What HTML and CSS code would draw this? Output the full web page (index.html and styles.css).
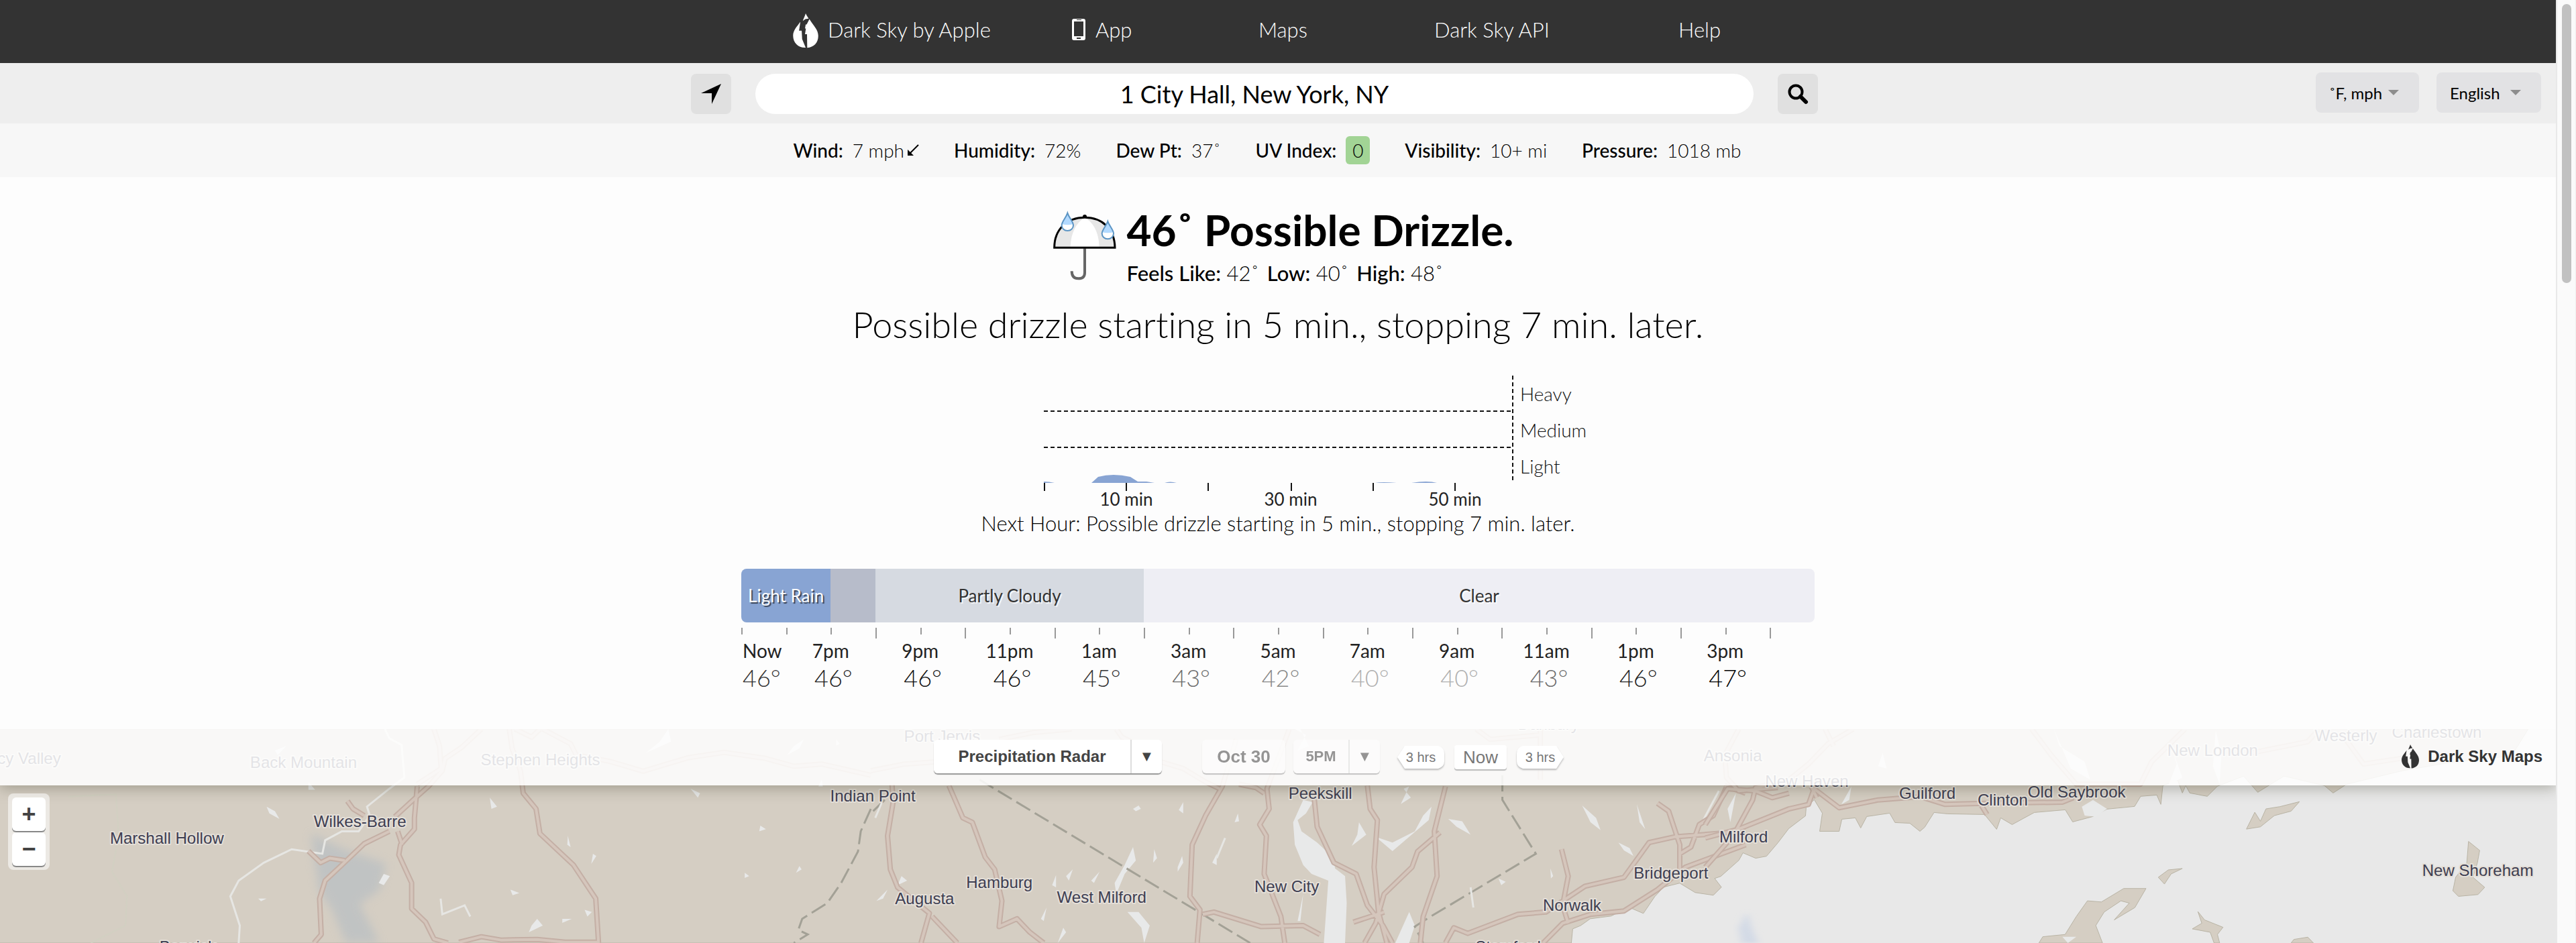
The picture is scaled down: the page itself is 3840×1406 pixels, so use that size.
FILE: index.html
```html
<!DOCTYPE html>
<html lang="en">
<head>
<meta charset="utf-8">
<title>Dark Sky - 1 City Hall, New York, NY</title>
<link rel="stylesheet" href="styles.css">
</head>
<body>
<svg class="defs" aria-hidden="true">
  <symbol id="drop" viewBox="0 0 114 158">
    <path fill="currentColor" d="M57 0C62 12 67 17 71 24Q56 23 44 34C48 22 54 11 57 0zM33 38L27 78H39L41 116L57 155C25 157 0 134 0 101C0 76 16 62 33 38zM74 26C92 55 114 74 114 102C114 134 94 153 64 156L63 94H54L58 68H54L57 50H66V55H59z"/>
  </symbol>
</svg>
<div class="page">
  <header class="topbar">
    <nav class="nav">
      <a href="#" class="brand"><svg class="logo"><use href="#drop"/></svg>Dark Sky by Apple</a>
      <a href="#" class="app"><svg class="phone" viewBox="0 0 20 32"><path fill="#fff" fill-rule="evenodd" d="M3 0H17Q20 0 20 3V29Q20 32 17 32H3Q0 32 0 29V3Q0 0 3 0zM3 4V26H17V4zM7 28V30H13V28zM7 1V2H14V1z"/></svg>App</a>
      <a href="#">Maps</a>
      <a href="#">Dark Sky API</a>
      <a href="#">Help</a>
    </nav>
  </header>

  <form class="search">
    <div class="search-main">
      <button type="button" class="square" aria-label="Use my location"><svg viewBox="0 0 32 32" width="32" height="32"><path d="M31 1L17 31V15H1z"/></svg></button>
      <input class="query" type="text" value="1 City Hall, New York, NY" aria-label="Location">
      <button type="submit" class="square" aria-label="Search"><svg viewBox="0 0 32 32" width="32" height="32"><circle cx="13" cy="13" r="9.500" fill="none" stroke="#000" stroke-width="4"/><path d="M20 20L28 28" stroke="#000" stroke-width="6" stroke-linecap="round"/></svg></button>
    </div>
    <div class="prefs">
      <label class="pref units"><select aria-label="Units"><option>˚F, mph</option></select></label>
      <label class="pref"><select aria-label="Language"><option>English</option></select></label>
    </div>
  </form>

  <dl class="stats">
    <div><dt>Wind:</dt><dd class="wind">7 mph<svg viewBox="0 0 18 18" width="18" height="18"><path d="M17 1L5 13" stroke="#000" stroke-width="2"/><path d="M1 17V8L10 17z"/></svg></dd></div>
    <div><dt>Humidity:</dt><dd>72%</dd></div>
    <div><dt>Dew Pt:</dt><dd>37˚</dd></div>
    <div><dt>UV Index:</dt><dd class="uv">0</dd></div>
    <div><dt>Visibility:</dt><dd>10+ mi</dd></div>
    <div><dt>Pressure:</dt><dd>1018 mb</dd></div>
  </dl>

  <main class="forecast">
    <section class="current">
      <svg class="umbrella" viewBox="0 0 360 375">
        <path d="M174 196V305Q174 331 145 331Q116 331 116 298" fill="none" stroke="#666" stroke-width="12"/>
        <ellipse cx="174" cy="54" rx="9" ry="9"/>
        <path d="M38 193C38 110 95 58 174 58S308 110 309 193z" fill="#e7e7e7"/>
        <path d="M110 188C112 125 140 75 174 60C210 75 238 125 238 188z" fill="#fff"/>
        <path d="M38 193C38 110 95 58 174 58S308 110 309 193z" fill="none" stroke="#000" stroke-width="9"/>
        <path d="M97 38C104 60 123 76 123 93A26 24 0 0 1 71 93C71 76 90 60 97 38z" fill="#fff"/>
        <path d="M97 38C104 60 119 72 122 88Q97 94 72 88C75 72 90 60 97 38z" fill="#b3daff"/>
        <path d="M97 38C104 60 123 76 123 93A26 24 0 0 1 71 93C71 76 90 60 97 38z" fill="none" stroke="#5c95c4" stroke-width="6"/>
        <path d="M277 75C284 97 303 113 303 130A26 24 0 0 1 251 130C251 113 270 97 277 75z" fill="#fff"/>
        <path d="M277 75C284 97 299 109 302 124Q277 130 252 124C255 109 270 97 277 75z" fill="#b3daff"/>
        <path d="M277 75C284 97 303 113 303 130A26 24 0 0 1 251 130C251 113 270 97 277 75z" fill="none" stroke="#5c95c4" stroke-width="6"/>
      </svg>
      <div class="current-text">
        <h1>46˚ Possible Drizzle.</h1>
        <p class="feels"><span><b>Feels Like:</b> 42˚</span><span><b>Low:</b> 40˚</span><span><b>High:</b> 48˚</span></p>
      </div>
    </section>
    <p class="summary">Possible drizzle starting in 5 min., stopping 7 min. later.</p>

    <svg class="hour-chart" viewBox="0 0 922 200" role="img" aria-label="Precipitation over the next hour">
      <path class="rain" d="M112 160V158Q120 158 128 160zM183 160L193 151Q204 148 216 148T241 151L252 158H265L277 160zM292 160Q300 157 310 160zM606 160Q616 158 638 160zM660 160Q684 156 698 160z"/>
      <path class="dash" d="M112 53H812M112 107H812M811 0V160"/>
      <path class="tick" d="M113 160V172M235 160V172M357 160V172M481 160V172M603 160V172M725 160V172"/>
      <g class="level"><text x="822" y="38">Heavy</text><text x="822" y="92">Medium</text><text x="822" y="146">Light</text></g>
      <g class="minute"><text x="235" y="194">10 min</text><text x="480" y="194">30 min</text><text x="725" y="194">50 min</text></g>
    </svg>
    <p class="next-hour">Next Hour: Possible drizzle starting in 5 min., stopping 7 min. later.</p>

    <section class="timeline">
      <div class="bars">
        <span class="rainy">Light Rain</span><span class="overcast"></span><span class="partly">Partly Cloudy</span><span class="clear">Clear</span>
      </div>
      <div class="ticks"><i></i><i></i><i></i><i></i><i></i><i></i><i></i><i></i><i></i><i></i><i></i><i></i><i></i><i></i><i></i><i></i><i></i><i></i><i></i><i></i><i></i><i></i><i></i><i></i></div>
      <ol class="hours">
        <li><span>Now</span><b class="t3">46°</b></li>
        <li><span>7pm</span><b class="t2">46°</b></li>
        <li><span>9pm</span><b class="t1">46°</b></li>
        <li><span>11pm</span><b class="t1">46°</b></li>
        <li><span>1am</span><b class="t3">45°</b></li>
        <li><span>3am</span><b class="t4">43°</b></li>
        <li><span>5am</span><b class="t5">42°</b></li>
        <li><span>7am</span><b class="t6">40°</b></li>
        <li><span>9am</span><b class="t6">40°</b></li>
        <li><span>11am</span><b class="t4">43°</b></li>
        <li><span>1pm</span><b class="t2">46°</b></li>
        <li><span>3pm</span><b class="t0">47°</b></li>
      </ol>
    </section>
  </main>

  <section class="map">
    <svg class="map-art" viewBox="0 0 3810 318" preserveAspectRatio="xMidYMin slice" aria-hidden="true">
      <defs>
        <filter id="soft" x="-30%" y="-30%" width="160%" height="160%"><feGaussianBlur stdDeviation="7"/></filter>
        <path id="roads-west" d="M870 84L835 165L805 215L800 270L775 340L750 395L715 475M785 84L795 160L798 260L755 330M755 340L750 480L750 530L725 600L722 645L745 770L745 885L770 945L785 1020L810 1038M920 84L925 170L940 270L945 370L968 440L975 550L1035 690L1075 840L1080 1038M705 540L660 595L620 690L590 760L580 840L583 1000L570 1038M720 540L728 600M630 405L640 440L660 470M560 628L582 680L598 660L625 670M980 84L1030 150L1040 200L1100 228L1160 272L1240 212L1305 188L1380 215L1430 250L1480 240L1568 290M830 1035L870 1010L905 1025L970 1022L1020 1034L1080 1034M930 84L960 120L975 84"/>
        <path id="roads-mid" d="M0 270L60 240L120 230M38 330L40 410L30 560L35 710L48 790L105 905L90 1038M110 920L155 1038M140 336L165 480L182 500L205 655L222 710L235 850L230 965L262 930L285 990L310 1038M230 130L290 100L360 84M440 84L450 120L500 180L520 230L560 260L600 320L625 350M655 130L630 340L600 470L576 600L572 830L590 890L585 1038M750 84L710 350L714 440L697 510L709 560L705 730L735 920L742 1038M660 330L690 345L705 370M595 910L615 900L700 965L775 960L805 1000M890 336L895 440L908 490L902 700L910 900L925 1038M795 400L800 520L830 680L870 730L890 870L918 960L935 1038M1030 340L1010 540L1015 740L990 920L985 1038M1020 545L980 630L970 700L920 820L905 950L885 1038M865 945L920 900M1085 84L1110 130L1200 110M1200 84V310M1030 1038L1045 970L1070 995L1160 910L1210 900L1280 785L1350 745L1395 590L1440 565L1568 540M1205 1038L1240 950L1290 910L1350 895L1410 800L1460 700L1568 600M1238 620L1250 740L1240 870L1250 950M1410 415L1430 450L1450 600L1450 720M1535 336L1510 470L1485 510L1470 610L1450 640M1568 370L1530 336"/>
        <path id="roads-east" d="M60 84L35 200L38 300L60 360L130 345M0 510L40 350L90 360L120 390L150 370M265 84L220 150L185 240L150 310L90 345L85 400L50 560L0 700M0 570L60 530L150 440L185 420L195 350L240 435L310 400L385 385L430 420L500 415L640 410L660 390M190 340L200 390M215 84L230 160M585 84L620 200L665 330L780 330L800 230L860 84M495 425L505 465M980 190L1080 140L1100 84M1145 120L1180 240L1260 210"/>
      </defs>
      <path class="land" d="M0 0H3763L3738 40L3651 49L3576 62L3493 82L3473 95L3460 84L3400 70L3361 94L3340 70L3301 85L3286 100L3260 95L3254 84L3249 95L3242 76L3220 84L3217 112L3211 98L3187 100L3178 115L3137 119L3116 130L3086 138L3075 120L3029 124L2996 142L2979 132L2973 149L2955 127L2900 126L2880 124L2866 146L2859 152L2844 140L2822 139L2814 125L2780 130L2771 147L2763 132L2743 134L2739 152L2710 152L2714 125L2702 105L2690 116L2689 129L2664 148L2648 169L2631 189L2615 192L2596 184L2590 195L2563 219L2554 222L2564 235L2552 247L2525 243L2502 229L2478 235L2465 249L2448 274L2427 265L2400 278L2384 280L2369 282L2355 292L2343 297L2341 318H0z"/>
      <g class="radar" filter="url(#soft)"><path d="M468 155L520 180L580 200L570 240L540 260L570 318H520L500 270L480 240z"/></g>
      <g transform="translate(2540 -28) scale(.82908 .33333)">
        <path class="land" d="M970 530L985 455L995 495L1005 440L1030 430L1065 408L1050 450L1020 470L995 520zM812 745L830 712L855 706L835 730L823 775zM598 1038L605 1010L645 1000L665 920L685 850L710 855L750 795L790 795L770 880L733 935L760 860L745 850L715 900L700 960L712 1038zM873 975L890 950L883 898L895 935L928 968L918 1000L922 1038H912L905 990zM1368 585L1388 625L1384 680L1376 745L1397 790L1385 822L1350 830L1340 805L1345 745L1365 680zM1050 1038L1055 1022L1080 1012L1090 1038z"/>
        <path class="water" d="M675 430L695 400L720 440L700 475L680 470zM40 440L55 370L45 500zM244 420L262 340L258 400zM310 250L318 190L325 260zM625 84L635 160L680 230L690 310L655 260zM640 1010L665 1010L650 1038zM830 336L845 240L835 160L855 300zM915 90L925 200L922 330L910 250z"/>
        <path class="radar-line" filter="url(#soft)" d="M75 900L60 970L65 1038H95L82 960z"/>
      </g>
      <g transform="translate(1300 -28) scale(.82908 .33333)">
        <path class="water" d="M775 400L792 410L780 460L765 490L772 540L800 590L830 660L832 705L850 740L853 860L850 1038H812L820 760L790 730L775 690L760 600L757 500zM470 610L475 670L455 730L440 820L437 770L455 690zM770 84L785 160L765 180L780 110L760 84zM955 350L968 390L950 418L965 340zM1035 485L1060 495L1075 555L1050 520zM905 565L935 590L975 540L990 470L1005 430L1000 490L935 628zM875 500L888 555L862 605L872 555zM1275 425L1300 480L1308 535L1290 500zM1373 420L1388 530L1378 500zM1340 590L1360 615L1367 650L1350 625zM470 440L480 425L484 440L475 450zM552 445L560 410L560 460zM652 500L658 460L660 495zM508 620L513 660L506 680zM550 700L558 650L560 680L550 720zM612 680L620 640L620 690zM325 780L332 735L332 790zM350 740L362 710L355 760zM55 740L65 760L48 780zM10 850L30 800L22 840zM305 930L315 880L310 940zM335 1038L345 970L350 990zM765 940L775 820L770 940zM940 1038L965 900L975 960L965 1038zM1125 750L1138 765L1130 780zM1218 705L1223 740L1219 750zM410 720L400 770L395 760zM460 900L480 900L500 960L490 1038L485 970z"/>
        <path class="border" d="M195 310L680 1038M1132 290L1132 400L1192 640L1000 925L975 965L990 1038M25 400L0 460"/>
        <path class="river" d="M8 480L20 410M635 570L620 660M1520 360L1490 500M1075 790L1080 880"/>
      </g>
      <g transform="translate(0 -28) scale(.82908 .33333)">
        <path class="river" d="M697 84L705 125L727 155L732 300L705 350L665 430L670 470L650 540L620 540L590 580L585 640L530 620L480 680L435 760L420 830L437 960L435 1038M797 840L800 910L840 870L850 920"/>
        <path class="river faint" d="M130 385L215 375L220 560L208 720L235 830L232 960L170 1038"/>
        <path class="water" d="M1205 84L1210 140L1165 190L1190 140zM1448 130L1440 170L1418 200L1430 160zM1506 130L1512 150L1506 158zM520 160L505 200L500 180zM560 320L572 355L560 355zM485 430L500 450L508 485L490 460zM885 390L898 430L888 440zM695 730L706 740L695 780L686 770zM1025 560L1030 610L1024 600zM1070 640L1076 650L1067 685zM1370 515L1380 530L1368 540zM1342 725L1350 740L1342 748zM1440 695L1444 710L1434 725zM1245 350L1262 370L1258 390zM970 930L980 960L955 990L960 960zM1055 890L1068 900L1060 920zM1015 930L1032 930L1015 948zM922 800L938 815L926 825zM470 840L485 840L475 852zM1480 310L1482 340L1474 340z"/>
        <path class="border" d="M1568 440L1550 540L1545 630L1515 770L1490 860L1445 930L1438 980L1455 1000L1430 1038"/>
      </g>
      <g transform="translate(0 -28) scale(.82908 .33333)"><use href="#roads-west" class="road"/><use href="#roads-west" class="road-core"/></g>
      <g transform="translate(1300 -28) scale(.82908 .33333)"><use href="#roads-mid" class="road"/><use href="#roads-mid" class="road-core"/></g>
      <g transform="translate(2540 -28) scale(.82908 .33333)"><use href="#roads-east" class="road"/><use href="#roads-east" class="road-core"/></g>
      <g class="places">
        <text x="26" y="52">Muncy Valley</text><text x="457" y="58">Back Mountain</text><text x="809" y="54">Stephen Heights</text>
        <text x="1406" y="19">Port Jervis</text><text x="2307" y="1">Danbury</text><text x="2581" y="48">Ansonia</text><text x="3294" y="40">New London</text>
        <text x="3492" y="18">Westerly</text><text x="3627" y="13">Charlestown</text><text x="2691" y="86">New Haven</text>
        <text x="541" y="146">Wilkes-Barre</text><text x="254" y="170">Marshall Hollow</text><text x="285" y="332">Berwick</text>
        <text x="1303" y="108">Indian Point</text><text x="1968" y="104">Peekskill</text><text x="1491" y="236">Hamburg</text><text x="1380" y="260">Augusta</text>
        <text x="1643" y="258">West Milford</text><text x="1918" y="242">New City</text><text x="2342" y="270">Norwalk</text><text x="2489" y="222">Bridgeport</text>
        <text x="2247" y="332">Stamford</text><text x="2597" y="168">Milford</text><text x="2870" y="104">Guilford</text><text x="2982" y="114">Clinton</text>
        <text x="3092" y="102">Old Saybrook</text><text x="3688" y="218">New Shoreham</text>
      </g>
    </svg>
    <div class="map-bar">
      <div class="layer"><button type="button">Precipitation Radar</button><button type="button" class="more" aria-label="Choose layer">▼</button></div>
      <button type="button" class="date">Oct 30</button>
      <div class="layer time"><button type="button">5PM</button><button type="button" class="more" aria-label="Choose time">▼</button></div>
      <div class="steps">
        <button type="button" class="step back"><svg viewBox="0 0 72 37"><path d="M12 1H62Q71 4 71 12V24Q71 32 62 35H12L1 18z"/></svg><span>3 hrs</span></button>
        <button type="button" class="now">Now</button>
        <button type="button" class="step"><svg viewBox="0 0 72 37"><path d="M10 1H60L71 18L60 35H10Q1 32 1 24V12Q1 4 10 1z"/></svg><span>3 hrs</span></button>
      </div>
      <a href="#" class="maps-link"><svg><use href="#drop"/></svg>Dark Sky Maps</a>
    </div>
    <div class="zoom"><button type="button" aria-label="Zoom in">+</button><button type="button" aria-label="Zoom out">−</button></div>
  </section>
</div>
<div class="scrollbar" aria-hidden="true"><div class="thumb"></div></div>
</body>
</html>
```
FILE: styles.css
```css
* { box-sizing: border-box; }
body {
  margin: 0;
  display: flex;
  min-height: 100vh;
  background: #fdfdfd;
  color: #000;
  font-family: Lato, "Liberation Sans", sans-serif;
  font-weight: 300;
  font-variant-ligatures: no-common-ligatures;
}
p, h1, dl, dd, ol { margin: 0; padding: 0; }
a { color: inherit; text-decoration: none; }
button, input, select { font: inherit; color: inherit; border: 0; margin: 0; }
.defs { position: absolute; width: 0; height: 0; }
.page { flex: 1; min-width: 0; display: flex; flex-direction: column; }

.scrollbar { width: 30px; padding: 6px 6px 0 7px; background: #fafafa; border-left: 2px solid #e9e9e9; border-right: 1px solid #f0f0f0; }
.thumb { height: 416px; border-radius: 8px; background: #c1c1c1; }

.topbar { background: #333; color: #fff; }
.nav {
  display: grid;
  grid-template-columns: 417px 278px 262px 364px auto;
  width: 1448px;
  margin: 0 auto;
  padding: 20px 0 22px;
  font-size: 31px;
  line-height: 52px;
}
.nav a { display: flex; align-items: center; height: 52px; padding-bottom: 4px; }
.brand { gap: 13px; }
.logo { width: 40px; height: 52px; flex: none; position: relative; top: 2px; }
.app { gap: 15px; }
.phone { width: 20px; height: 32px; }

.search { display: grid; grid-template-columns: 1fr 1750px 1fr; height: 90px; background: #eee; }
.search-main { grid-column: 2; display: flex; align-items: flex-start; gap: 36px; padding: 16px 70px 0 0; }
.square { flex: none; width: 60px; height: 60px; padding: 0; border-radius: 8px; background: #e0e0e0; display: flex; align-items: center; justify-content: center; }
.query { flex: 1; min-width: 0; height: 60px; padding: 0 30px; border-radius: 30px; background: #fff; font-size: 36px; font-weight: 400; text-align: center; }
.prefs { display: flex; justify-content: flex-end; align-items: flex-start; gap: 26px; padding: 14px 22px 0 0; }
.pref { position: relative; width: 156px; height: 60px; border-radius: 8px; background: #e2e2e4; font-size: 24px; font-weight: 400; }
.units { width: 154px; }
.pref select { width: 100%; height: 60px; padding: 0 20px; appearance: none; background: transparent; }
.pref::after { content: ""; position: absolute; right: 30px; top: 26px; border: 8px solid transparent; border-top-color: #8d8d8d; border-bottom: 0; }

.stats { display: flex; justify-content: center; align-items: center; gap: 52px; height: 80px; padding-right: 32px; background: #f7f7f7; font-size: 28px; line-height: 42px; }
.stats div { display: flex; gap: 14px; }
.stats dt { font-weight: 500; }
.wind { display: flex; align-items: center; gap: 4px; }
.uv { width: 36px; text-align: center; border-radius: 6px; background: #a2d495; }

.forecast { padding: 41px 0 55px; text-align: center; }
.current { display: flex; justify-content: center; text-align: left; height: 125px; padding-left: 6px; }
.umbrella { width: 120px; height: 125px; }
.current-text { padding-top: 2px; }
h1 { font-size: 64px; line-height: 72px; font-weight: 700; }
.feels { display: flex; gap: 12px; margin-top: 8px; font-size: 31px; line-height: 40px; }
.feels b { font-weight: 500; }
.summary { padding-top: 20px; font-size: 54px; line-height: 68px; }
.hour-chart { display: block; width: 922px; height: 200px; margin: 42px auto 0; }
.rain { fill: #88a4d3; }
.dash { fill: none; stroke: #111; stroke-width: 2; stroke-dasharray: 6 4; }
.tick { stroke: #111; stroke-width: 2; }
.level { font-size: 28px; fill: #111; }
.minute { font-size: 26px; font-weight: 400; fill: #222; text-anchor: middle; }
.next-hour { font-size: 31px; line-height: 40px; }

.timeline { width: 1600px; margin: 48px auto 0; }
.bars { display: grid; grid-template-columns: 2fr 1fr 6fr 15fr; height: 80px; border-radius: 8px; overflow: hidden; font-size: 26px; line-height: 80px; font-weight: 400; color: #333; text-shadow: 2px 2px 1px rgba(255,255,255,.8); }
.rainy { background: #88a4d3; color: #fff; white-space: nowrap; text-shadow: 2px 2px 1px rgba(0,0,0,.6); }
.overcast { background: #b7bcca; }
.partly { background: #d6dae1; }
.clear { background: #eeeef4; }
.ticks { display: grid; grid-template-columns: repeat(24, 1fr); height: 24px; padding-top: 8px; }
.ticks i { height: 10px; border-left: 2px solid #999; }
.ticks i:nth-child(2n+4) { height: 16px; }
.hours { display: grid; grid-template-columns: repeat(24, 1fr); list-style: none; }
.hours li { grid-column-end: span 2; display: flex; flex-direction: column; align-items: center; }
.hours li:first-child { grid-column-end: span 1; align-items: flex-start; padding-left: 2px; }
.hours span { font-size: 28px; line-height: 36px; font-weight: 400; color: #222; }
.hours b { padding-left: 8px; font-size: 36px; line-height: 44px; font-weight: 300; }
.hours li:first-child b { padding-left: 0; }
.hours .t0 { color: #000; }
.t1 { color: #111; }
.t2 { color: #222; }
.t3 { color: #333; }
.t4 { color: #6c6c6c; }
.t5 { color: #888; }
.t6 { color: #b0b0b0; }

.map { position: relative; flex: 1; min-height: 318px; overflow: hidden; background: #e8e8e8; font-family: "Liberation Sans", Arial, sans-serif; }
.map-art { position: absolute; left: 0; top: 0; width: 100%; height: 100%; }
.map-art path, .map-art use { vector-effect: non-scaling-stroke; }
.land { fill: #d5cec3; stroke: #b9b4a5; stroke-width: 1; }
.water { fill: #e8e9e9; }
.river { fill: none; stroke: #e6e6e3; stroke-width: 3; }
.faint { stroke: #d2d0c2; stroke-width: 2; }
.border { fill: none; stroke: #a3a196; stroke-width: 3; stroke-dasharray: 24 8; }
.road, .road-core { fill: none; stroke-linejoin: round; vector-effect: non-scaling-stroke; }
.road { stroke: #c4afa5; stroke-width: 8; }
.road-core { stroke: #d5c6bc; stroke-width: 4; }
.radar { fill: #b3bcc3; opacity: .6; }
.radar-line { fill: #d3dae6; }
.places { font-size: 24px; font-weight: 400; fill: #3e3e52; text-anchor: middle; stroke: #e4dfd8; stroke-width: 4; stroke-linejoin: round; paint-order: stroke; }

.map-bar { position: relative; display: flex; align-items: flex-start; height: 84px; padding: 16px 20px 0 1392px; background: rgba(255,255,255,.86); box-shadow: 0 4px 20px rgba(60,60,40,.35); color: #444; font-size: 24px; font-weight: 700; }
.map-bar button { padding: 0; background: #fff; white-space: nowrap; }
.layer { display: flex; width: 340px; height: 50px; border-radius: 6px; overflow: hidden; box-shadow: 0 2px 1px #999; margin-right: 60px; flex: none; }
.layer button:first-child { flex: 1; border-right: 2px solid #ddd; }
.map-bar .more { width: 45px; font-size: 22px; }
.date, .time { opacity: .55; }
.map-bar .date { width: 124px; height: 50px; margin-right: 12px; border-radius: 6px; font-size: 26px; box-shadow: 0 2px 1px #999; flex: none; }
.time { width: 129px; margin-right: 25px; font-size: 22px; }
.steps { display: flex; gap: 14px; padding-top: 8px; font-weight: 400; color: #777; }
.map-bar .step { position: relative; width: 72px; height: 37px; font-size: 20px; background: transparent; }
.step svg { position: absolute; left: 0; top: 0; width: 72px; height: 37px; filter: drop-shadow(0 2px 1px #bbb); }
.step path { fill: #fff; }
.step span { position: relative; }
.map-bar .now { width: 78px; height: 36px; border-radius: 4px; font-size: 26px; box-shadow: 0 2px 1px #bbb; }
.maps-link { display: flex; align-items: center; gap: 13px; height: 50px; margin-left: auto; color: #333; }
.maps-link svg { width: 26px; height: 36px; }

.zoom { position: absolute; left: 12px; top: 96px; display: flex; flex-direction: column; gap: 2px; width: 62px; padding: 6px; border-radius: 8px; background: rgba(255,255,255,.55); }
.zoom button { height: 50px; padding: 0; background: #fff; color: #444; font-size: 36px; font-weight: 700; line-height: 48px; box-shadow: 0 2px 0 #888; border-radius: 6px; }
```
